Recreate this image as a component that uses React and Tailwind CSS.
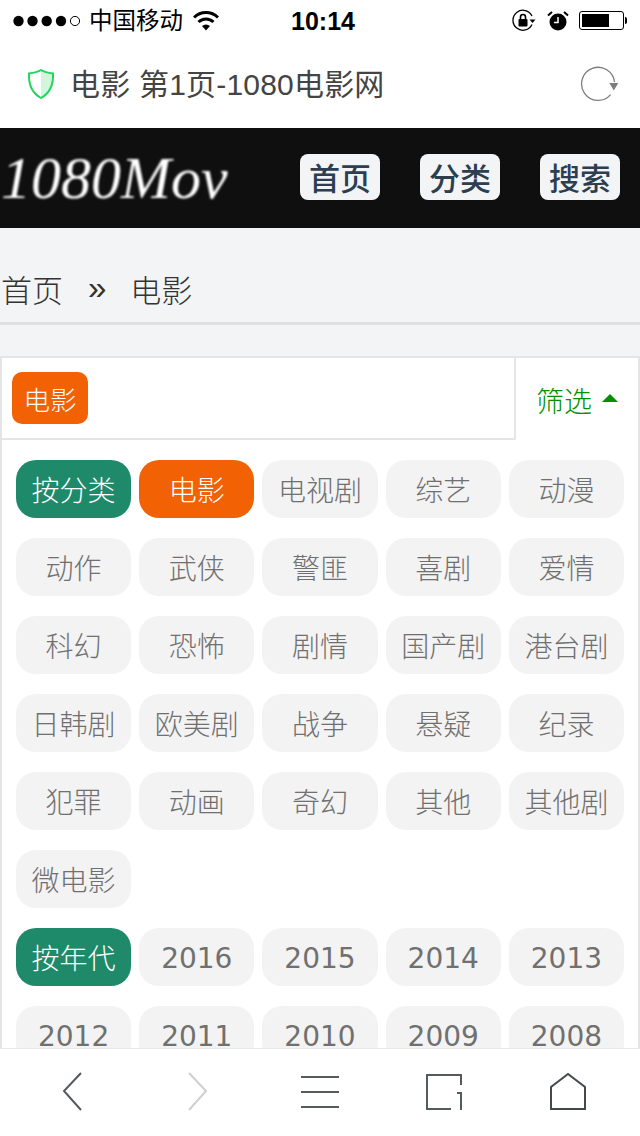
import React from 'react';

const CJK = "font-['Liberation_Sans','Noto_Sans_CJK_SC',sans-serif]";

const categories = [
  '电视剧', '综艺', '动漫', '动作', '武侠', '警匪', '喜剧', '爱情', '科幻', '恐怖', '剧情', '国产剧', '港台剧',
  '日韩剧', '欧美剧', '战争', '悬疑', '纪录', '犯罪', '动画', '奇幻', '其他', '其他剧', '微电影',
];
const years = ['2016', '2015', '2014', '2013', '2012', '2011', '2010', '2009', '2008'];

function Chip({ tone = 'gray', digits, children }) {
  const toneClass = {
    gray: 'bg-[#f3f3f3] text-[#707070]',
    green: 'bg-[#1e8a69] text-white',
    orange: 'bg-[#f26205] text-white',
  }[tone];
  return (
    <div
      className={`h-[58px] rounded-[20px] flex items-center justify-center ${toneClass} ${
        digits ? "font-['DejaVu_Sans',sans-serif] text-[28px] pt-1" : "font-['Noto_Sans_CJK_SC',sans-serif] text-[28px] font-light"
      }`}
    >
      {children}
    </div>
  );
}

function StatusBar() {
  return (
    <div className="h-10 bg-white flex items-center relative text-black pt-[1px]">
      <svg width="70" height="12" viewBox="0 0 70 12" className="ml-[13px]">
        <circle cx="5.5" cy="6" r="5.2" />
        <circle cx="19.5" cy="6" r="5.2" />
        <circle cx="33.7" cy="6" r="5.2" />
        <circle cx="48" cy="6" r="5.2" />
        <circle cx="62" cy="6" r="4.6" fill="none" stroke="#000" strokeWidth="1" />
      </svg>
      <span className={`ml-[6px] text-[23.5px] leading-none pt-[2px] ${CJK}`}>中国移动</span>
      <svg width="26" height="20" viewBox="0 0 26 20" className="ml-[10px]">
        <path d="M1 6.5a17 17 0 0 1 24 0" fill="none" stroke="#000" strokeWidth="3" />
        <path d="M5.5 11a10.6 10.6 0 0 1 15 0" fill="none" stroke="#000" strokeWidth="3" />
        <path d="M9 15a6 6 0 0 1 8 0l-4 4.5z" />
      </svg>
      <span className="ml-[72px] text-[25px] font-['Liberation_Sans',sans-serif] font-bold leading-none pt-[1px]">10:14</span>
      <svg width="24" height="24" viewBox="0 0 24 24" className="ml-[157px]">
        <path d="M20 15.5A10 10 0 1 1 20 7" fill="none" stroke="#000" strokeWidth="1.3" />
        <path d="M17.5 10.5h6l-3 3.5z" />
        <rect x="6.5" y="10" width="9" height="7.5" rx="1" />
        <path d="M8.5 10V8a2.500 2.500 0 0 1 5 0v2" fill="none" stroke="#000" strokeWidth="1.6" />
      </svg>
      <svg width="22" height="22" viewBox="0 0 22 22" className="ml-[11px]">
        <circle cx="11" cy="12" r="8.5" />
        <path d="M11 7v5.500H7" fill="none" stroke="#fff" strokeWidth="1.5" />
        <path d="M1 5.500 5 2M21 5.500 17 2" fill="none" stroke="#000" strokeWidth="2" />
      </svg>
      <div className="ml-[10px] w-[45px] h-[19px] border border-black rounded-[3px] p-[2px]">
        <div className="w-[27px] h-full bg-black" />
      </div>
      <div className="ml-[1px] w-[2px] h-[7px] bg-black rounded-r-sm" />
    </div>
  );
}

function AddressBar() {
  return (
    <div className="h-[88px] bg-white flex items-center">
      <svg width="28" height="32" viewBox="0 0 28 32" className="ml-[27px]">
        <path d="M14 2 C10 4.500 6 5 2 5.500 C1.500 16 5 25 14 30Z" fill="#fff" />
        <path d="M14 2 C18 4.500 22 5 26 5.500 C26.500 16 23 25 14 30Z" fill="#d2f5dc" />
        <path d="M14 2C10 4.500 6 5 2 5.500 1.500 16 5 25 14 30 23 25 26.500 16 26 5.500 22 5 18 4.500 14 2Z" fill="none" stroke="#22d65e" strokeWidth="2" />
      </svg>
      <span className={`ml-[15px] text-[#444] text-[30px] leading-none pt-[1px] tracking-[0.2px] ${CJK}`}>电影 第1页-1080电影网</span>
      <svg width="42" height="38" viewBox="0 0 42 38" className="ml-auto mr-[18px]">
        <path d="M34.500 17A16.500 16.500 0 1 0 30.600 29.600" fill="none" stroke="#7d7d7d" strokeWidth="1.3" />
        <path d="M29.300 18h9l-4.500 7.500z" fill="#7d7d7d" />
      </svg>
    </div>
  );
}

function Header() {
  return (
    <div className="h-[100px] bg-[#0f0f0f] flex items-center relative">
      <span className="ml-[1px] font-['Liberation_Serif',serif] italic text-white text-[60px] leading-none blur-[0.8px]">
        1080Mov
      </span>
      <div className="ml-auto mr-5 mb-[2px] flex gap-10">
        {['首页', '分类', '搜索'].map((t) => (
          <div
            key={t}
            className="w-20 h-[46px] rounded-lg bg-[#f3f4f6] text-[#2c3e50] text-[31px] font-medium flex items-center justify-center font-['Noto_Sans_CJK_SC',sans-serif]"
          >
            {t}
          </div>
        ))}
      </div>
    </div>
  );
}

function Breadcrumb() {
  return (
    <div className="h-[97px] pt-[28px] border-b-[3px] border-[#e0e0e0] flex items-center text-[31px] text-[#333] font-['Noto_Sans_CJK_SC',sans-serif] font-light">
      <span className="ml-[1px]">首页</span>
      <span className="ml-[25px] font-['Liberation_Sans',sans-serif] text-[33px] mb-[2px]">»</span>
      <span className="ml-[24px]">电影</span>
    </div>
  );
}

function Filter() {
  return (
    <div className="mt-[31px] bg-white border-x-2 border-t-2 border-[#e5e5e5]">
      <div className="flex">
        <div className="w-[514px] h-[82px] border-r-2 border-b-2 border-[#e5e5e5] pl-[10px] pt-[14px]">
          <div className="w-[76px] h-[52px] pt-[1px] rounded-[10px] bg-[#f26205] text-white text-[26.500px] flex items-center justify-center font-['Noto_Sans_CJK_SC',sans-serif] font-light">
            电影
          </div>
        </div>
        <div className="flex-1 flex items-center pl-[20px] h-[84px]">
          <span className="text-[#009100] text-[28px] font-['Noto_Sans_CJK_SC',sans-serif] font-light">筛选</span>
          <svg width="16" height="8" viewBox="0 0 16 8" className="ml-[10px] mb-[4px]">
            <path d="M8 0l8 8H0z" fill="#009100" />
          </svg>
        </div>
      </div>
      <div className="-mt-[2px] grid grid-cols-5 gap-x-2 gap-y-5 px-[14px] pt-5">
        <Chip tone="green">按分类</Chip>
        <Chip tone="orange">电影</Chip>
        {categories.map((c) => (
          <Chip key={c}>{c}</Chip>
        ))}
        <div className="col-span-4" />
        <Chip tone="green">按年代</Chip>
        {years.map((y) => (
          <Chip key={y} digits>
            {y}
          </Chip>
        ))}
      </div>
    </div>
  );
}

function BottomBar() {
  return (
    <div className="h-[88px] shrink-0 bg-white border-t border-[#e8e8e8] pt-[1px]">
      <svg width="640" height="86" viewBox="0 0 640 86" fill="none" strokeWidth="2" className="block">
        <path d="M81 23 64 41l17 19" stroke="#555a5f" />
        <path d="M189 23l17 18-17 19" stroke="#cfcfcf" />
        <path d="M301 27h38M301 42h38M301 57h38" stroke="#555a5f" />
        <path d="M451 59h-24V25h34v10M457 43h4v17" stroke="#555a5f" />
        <path d="M551 59V37l17-13 17 13v22z" stroke="#45494e" />
      </svg>
    </div>
  );
}

export default function App() {
  return (
    <div className="w-[640px] h-[1136px] flex flex-col overflow-hidden bg-[#f3f4f6]">
      <StatusBar />
      <AddressBar />
      <div className="flex-1 overflow-hidden">
        <Header />
        <Breadcrumb />
        <Filter />
      </div>
      <BottomBar />
    </div>
  );
}
